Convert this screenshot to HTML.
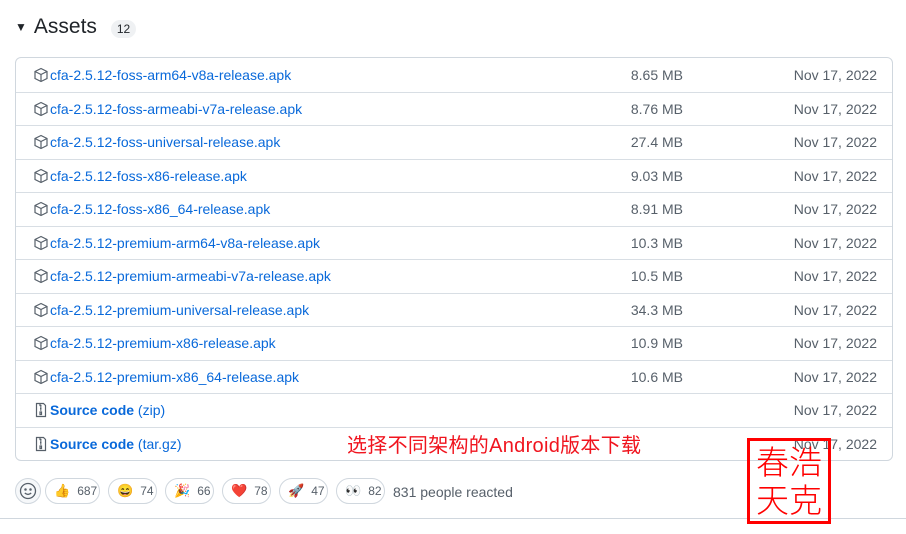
<!DOCTYPE html>
<html><head><meta charset="utf-8"><style>
body{margin:0;width:906px;height:534px;background:#fff;font-family:"Liberation Sans","Noto Sans CJK SC",sans-serif;position:relative;overflow:hidden;color:#1f2328}
.h{position:absolute;left:15px;top:15px;font-size:21px;display:flex;align-items:center}
.h .tri{font-size:12px;margin-right:7px}
.cnt{position:absolute;left:111px;top:20px;width:25px;height:18px;border-radius:9px;background:#eff1f3;font-size:12px;text-align:center;line-height:18px}
.box{position:absolute;left:15px;top:57px;width:876px;height:402px;border:1px solid #d0d7de;border-radius:6px}
.row{height:33.5px;border-top:1px solid #d8dee4;box-sizing:border-box;position:relative;font-size:14px;display:flex;align-items:center}
.row:first-child{border-top:none}
.nm{position:absolute;left:17px;color:#0969da;display:flex;align-items:center}
.nm svg{margin-right:1px}
.sz{position:absolute;right:209px;color:#57606a}
.dt{position:absolute;right:15px;color:#57606a}
.ann{position:absolute;left:347px;top:429px;color:#f0141e;font-size:20px;letter-spacing:0.3px}
.stamp{position:absolute;left:747px;top:438px;width:78px;height:80px;border:3px solid #f00;color:#f00;font-size:33px;line-height:38px;text-align:center;font-family:"Noto Sans CJK SC",sans-serif;font-weight:300;box-sizing:content-box}
.re{position:absolute;top:478px;height:26px;border:1px solid #d0d7de;border-radius:13px;box-sizing:border-box;font-size:12px;color:#57606a;display:flex;align-items:center;padding-left:8px}
.re b{font-weight:normal;margin-right:7px;font-size:13px}
.line{position:absolute;left:0;top:518px;width:906px;border-top:1px solid #d0d7de}
</style></head><body>
<div class="h"><span class="tri">▼</span>Assets</div>
<div class="cnt">12</div>
<div class="box">
<div class="row"><span class="nm"><svg width="16" height="16" viewBox="0 0 16 16" fill="none" stroke="#57606a" stroke-width="1.2"><path d="M8 1.5l6 3v7l-6 3-6-3v-7z M2 4.5l6 3 6-3 M8 7.5v7"/></svg>cfa-2.5.12-foss-arm64-v8a-release.apk</span><span class="sz">8.65 MB</span><span class="dt">Nov 17, 2022</span></div>
<div class="row"><span class="nm"><svg width="16" height="16" viewBox="0 0 16 16" fill="none" stroke="#57606a" stroke-width="1.2"><path d="M8 1.5l6 3v7l-6 3-6-3v-7z M2 4.5l6 3 6-3 M8 7.5v7"/></svg>cfa-2.5.12-foss-armeabi-v7a-release.apk</span><span class="sz">8.76 MB</span><span class="dt">Nov 17, 2022</span></div>
<div class="row"><span class="nm"><svg width="16" height="16" viewBox="0 0 16 16" fill="none" stroke="#57606a" stroke-width="1.2"><path d="M8 1.5l6 3v7l-6 3-6-3v-7z M2 4.5l6 3 6-3 M8 7.5v7"/></svg>cfa-2.5.12-foss-universal-release.apk</span><span class="sz">27.4 MB</span><span class="dt">Nov 17, 2022</span></div>
<div class="row"><span class="nm"><svg width="16" height="16" viewBox="0 0 16 16" fill="none" stroke="#57606a" stroke-width="1.2"><path d="M8 1.5l6 3v7l-6 3-6-3v-7z M2 4.5l6 3 6-3 M8 7.5v7"/></svg>cfa-2.5.12-foss-x86-release.apk</span><span class="sz">9.03 MB</span><span class="dt">Nov 17, 2022</span></div>
<div class="row"><span class="nm"><svg width="16" height="16" viewBox="0 0 16 16" fill="none" stroke="#57606a" stroke-width="1.2"><path d="M8 1.5l6 3v7l-6 3-6-3v-7z M2 4.5l6 3 6-3 M8 7.5v7"/></svg>cfa-2.5.12-foss-x86_64-release.apk</span><span class="sz">8.91 MB</span><span class="dt">Nov 17, 2022</span></div>
<div class="row"><span class="nm"><svg width="16" height="16" viewBox="0 0 16 16" fill="none" stroke="#57606a" stroke-width="1.2"><path d="M8 1.5l6 3v7l-6 3-6-3v-7z M2 4.5l6 3 6-3 M8 7.5v7"/></svg>cfa-2.5.12-premium-arm64-v8a-release.apk</span><span class="sz">10.3 MB</span><span class="dt">Nov 17, 2022</span></div>
<div class="row"><span class="nm"><svg width="16" height="16" viewBox="0 0 16 16" fill="none" stroke="#57606a" stroke-width="1.2"><path d="M8 1.5l6 3v7l-6 3-6-3v-7z M2 4.5l6 3 6-3 M8 7.5v7"/></svg>cfa-2.5.12-premium-armeabi-v7a-release.apk</span><span class="sz">10.5 MB</span><span class="dt">Nov 17, 2022</span></div>
<div class="row"><span class="nm"><svg width="16" height="16" viewBox="0 0 16 16" fill="none" stroke="#57606a" stroke-width="1.2"><path d="M8 1.5l6 3v7l-6 3-6-3v-7z M2 4.5l6 3 6-3 M8 7.5v7"/></svg>cfa-2.5.12-premium-universal-release.apk</span><span class="sz">34.3 MB</span><span class="dt">Nov 17, 2022</span></div>
<div class="row"><span class="nm"><svg width="16" height="16" viewBox="0 0 16 16" fill="none" stroke="#57606a" stroke-width="1.2"><path d="M8 1.5l6 3v7l-6 3-6-3v-7z M2 4.5l6 3 6-3 M8 7.5v7"/></svg>cfa-2.5.12-premium-x86-release.apk</span><span class="sz">10.9 MB</span><span class="dt">Nov 17, 2022</span></div>
<div class="row"><span class="nm"><svg width="16" height="16" viewBox="0 0 16 16" fill="none" stroke="#57606a" stroke-width="1.2"><path d="M8 1.5l6 3v7l-6 3-6-3v-7z M2 4.5l6 3 6-3 M8 7.5v7"/></svg>cfa-2.5.12-premium-x86_64-release.apk</span><span class="sz">10.6 MB</span><span class="dt">Nov 17, 2022</span></div>
<div class="row"><span class="nm"><svg width="16" height="16" viewBox="0 0 16 16" fill="none" stroke="#57606a" stroke-width="1.2"><path d="M3.5 1.5h7l2 2v11h-9z M7 2v1.5h1.5M7 5h1.5M7 6.5h1.5M7 8h1.5M7 10h1.5v2.5H7z"/></svg><span style="font-weight:600">Source code</span>&nbsp;(zip)</span><span class="dt">Nov 17, 2022</span></div>
<div class="row"><span class="nm"><svg width="16" height="16" viewBox="0 0 16 16" fill="none" stroke="#57606a" stroke-width="1.2"><path d="M3.5 1.5h7l2 2v11h-9z M7 2v1.5h1.5M7 5h1.5M7 6.5h1.5M7 8h1.5M7 10h1.5v2.5H7z"/></svg><span style="font-weight:600">Source code</span>&nbsp;(tar.gz)</span><span class="dt">Nov 17, 2022</span></div>
</div>
<div class="ann">选择不同架构的Android版本下载</div>
<div class="re" style="left:15px;width:26px;padding:0;justify-content:center;background:#f6f8fa"><svg width="18" height="18" viewBox="0 0 18 18" fill="none" stroke="#57606a" stroke-width="1.3"><circle cx="9" cy="9" r="7.5"/><circle cx="6.5" cy="7.5" r=".6" fill="#57606a"/><circle cx="11.5" cy="7.5" r=".6" fill="#57606a"/><path d="M5.8 11q3.2 2.8 6.4 0"/></svg></div>
<div class="re" style="left:45px;width:55px"><b>👍</b>687</div>
<div class="re" style="left:108px;width:49px"><b>😄</b>74</div>
<div class="re" style="left:165px;width:49px"><b>🎉</b>66</div>
<div class="re" style="left:222px;width:49px"><b>❤️</b>78</div>
<div class="re" style="left:279px;width:49px"><b>🚀</b>47</div>
<div class="re" style="left:336px;width:49px"><b>👀</b>82</div>
<div style="position:absolute;left:393px;top:484px;font-size:14px;color:#57606a">831 people reacted</div>
<div class="line"></div>
<div class="stamp">春浩<br>天克</div>
</body></html>
